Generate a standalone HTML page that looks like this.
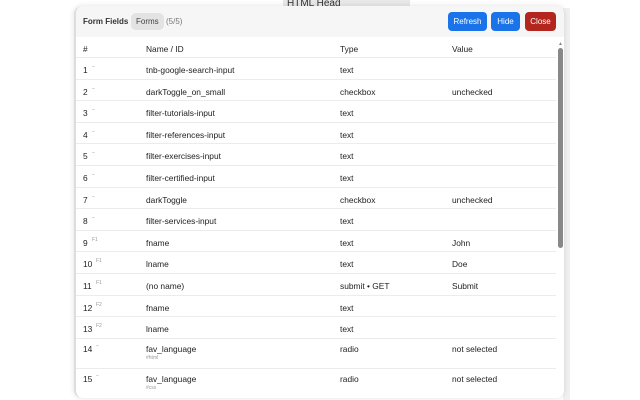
<!DOCTYPE html>
<html><head><style>
*{margin:0;padding:0;box-sizing:border-box}
body{width:640px;height:400px;overflow:hidden;background:#fff;font-family:"Liberation Sans",sans-serif;font-size:8.4px;color:#222;position:relative}
.bgtxt{position:absolute;left:283px;top:-2px;width:127px;height:10px;background:#e8e8e8;font-size:10px;padding-left:4px;color:#333}
.side{position:absolute;left:563px;top:8px;width:7px;height:392px;background:#f0f0f0}
.panel{position:absolute;left:74px;top:6px;width:490px;height:392px;background:#fff;border-left:2px solid #ddd;border-radius:8px;overflow:hidden;box-shadow:0 0 6px rgba(0,0,0,.12)}
.hdr{height:31px;background:#f6f6f6;position:relative}
.hdr .t{position:absolute;left:7px;top:11px;font-weight:bold;font-size:8px;color:#333}
.hdr .f{position:absolute;left:55px;top:7px;background:#e3e3e3;border-radius:5px;padding:4px 5px;font-size:8px;color:#444}
.hdr .c{position:absolute;left:90px;top:11px;color:#777;font-size:8px}
.btn{position:absolute;top:6px;height:19px;border-radius:4px;color:#fff;font-size:8px;text-align:center;line-height:19px}
.row{position:absolute;left:0;width:480px;border-bottom:1px solid #ececec}
.row span{position:absolute;top:0}
.sb{position:absolute;left:482px;top:42px;width:5px;height:200px;background:#888;border-radius:3px}
.sup{font-size:5px;color:#999;position:absolute}
.sub{font-size:5px;color:#999;position:absolute}
</style></head><body>
<div class="bgtxt">HTML Head</div>
<div class="side"></div>
<div class="panel">
<div class="hdr"><span class="t">Form Fields</span><span class="f">Forms</span><span class="c">(5/5)</span>
<div class="btn" style="left:372px;width:39px;background:#1a73e8">Refresh</div>
<div class="btn" style="left:415px;width:29px;background:#1a73e8">Hide</div>
<div class="btn" style="left:449px;width:31px;background:#b3261e">Close</div>
</div>
<div id="t"></div>
<div class="sb"></div>
<div style="position:absolute;left:482px;top:35px;font-size:5px;color:#888">▲</div>
</div>
<script>
var rows=[["#","Name / ID","Type","Value",""],
["1","tnb-google-search-input","text","","–"],
["2","darkToggle_on_small","checkbox","unchecked","–"],
["3","filter-tutorials-input","text","","–"],
["4","filter-references-input","text","","–"],
["5","filter-exercises-input","text","","–"],
["6","filter-certified-input","text","","–"],
["7","darkToggle","checkbox","unchecked","–"],
["8","filter-services-input","text","","–"],
["9","fname","text","John","F1"],
["10","lname","text","Doe","F1"],
["11","(no name)","submit • GET","Submit","F1"],
["12","fname","text","","F2"],
["13","lname","text","","F2"],
["14","fav_language","radio","not selected","–","#html"],
["15","fav_language","radio","not selected","–","#css"]];
var h='',y=31;
rows.forEach(function(r,i){
 var hh=i==0?21:(i>=14?30:21.6);
 var ty=i>=14?5:7;
 h+='<div class="row" style="top:'+y+'px;height:'+hh+'px">';
 h+='<span style="left:7px;top:'+ty+'px">'+r[0]+'</span>';
 if(r[4])h+='<span class="sup" style="left:'+(r[0].length>1?20:16)+'px;top:'+(ty-1)+'px">'+r[4]+'</span>';
 h+='<span style="left:70px;top:'+ty+'px">'+r[1]+'</span>';
 if(r[5])h+='<span class="sub" style="left:70px;top:'+(ty+11)+'px">'+r[5]+'</span>';
 h+='<span style="left:264px;top:'+ty+'px">'+r[2]+'</span>';
 h+='<span style="left:376px;top:'+ty+'px">'+r[3]+'</span></div>';
 y+=hh;
});
document.getElementById('t').innerHTML=h;
</script>
</body></html>
